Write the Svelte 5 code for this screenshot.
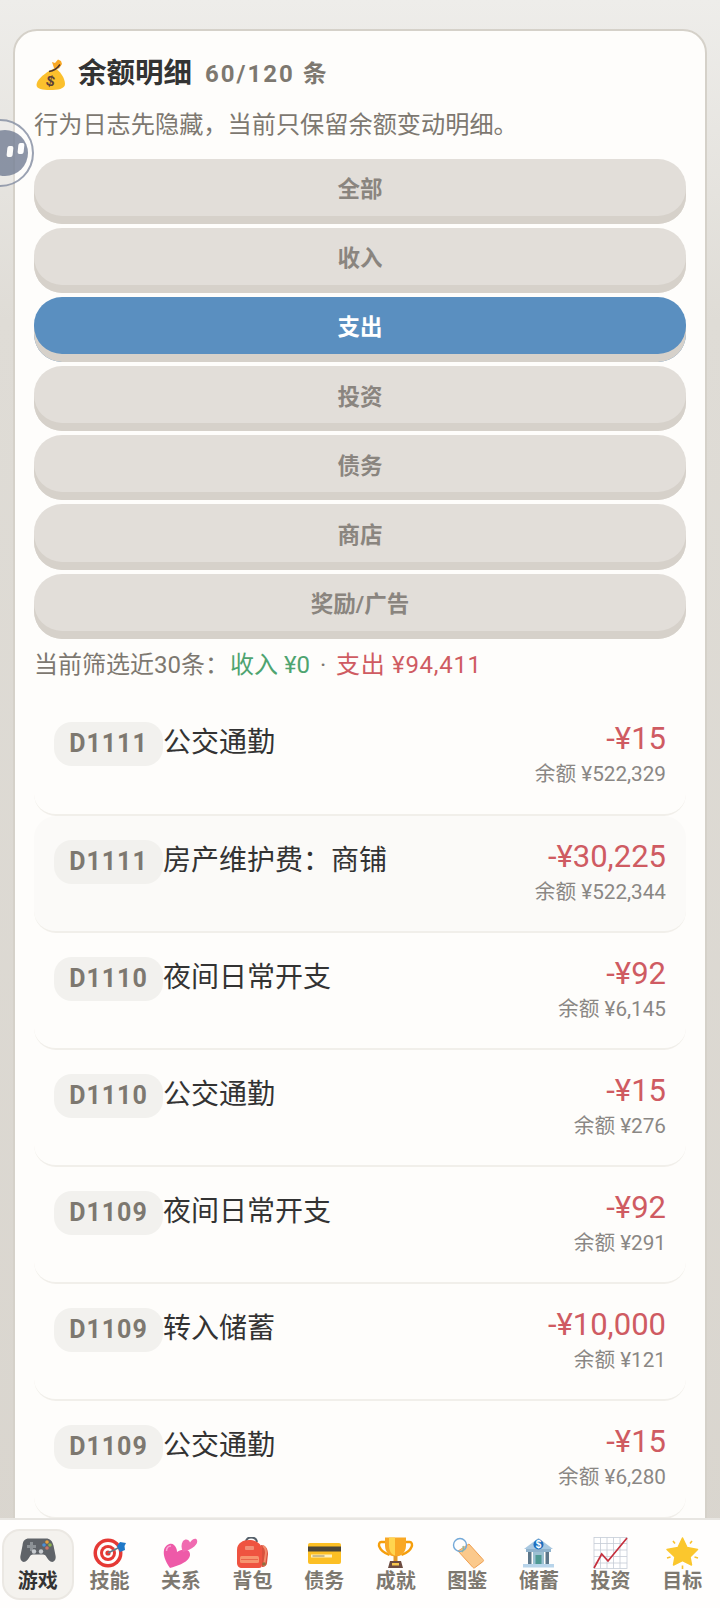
<script>
  const filters = ['全部', '收入', '支出', '投资', '债务', '商店', '奖励/广告'];
  const rows = [
    { day: 'D1111', title: '公交通勤', amount: '-¥15', balance: '¥522,329' },
    { day: 'D1111', title: '房产维护费：商铺', amount: '-¥30,225', balance: '¥522,344', alt: true },
    { day: 'D1110', title: '夜间日常开支', amount: '-¥92', balance: '¥6,145' },
    { day: 'D1110', title: '公交通勤', amount: '-¥15', balance: '¥276' },
    { day: 'D1109', title: '夜间日常开支', amount: '-¥92', balance: '¥291' },
    { day: 'D1109', title: '转入储蓄', amount: '-¥10,000', balance: '¥121' },
    { day: 'D1109', title: '公交通勤', amount: '-¥15', balance: '¥6,280' }
  ];
  const tabs = ['游戏', '技能', '关系', '背包', '债务', '成就', '图鉴', '储蓄', '投资', '目标'];
</script>

<div class="page">
  <main class="scroll">
    <section class="card">
      <h2 class="head">
        <svg class="bag" viewBox="0 0 30 31">
          <path d="M13 12C7 16 .5 21 .5 26c0 4 6 5 13.500 5s15-1 15-6c0-6-5-13-10-16z" fill="#fbc02d"/>
          <path d="M18 9l-2-6 3 1 3-3.500 3 1.500 1 3-3 4.500z" fill="#f9a825"/>
          <path d="M13 12.500c4-.5 8-2.500 11-7" stroke="#4e342e" stroke-width="1.500" fill="none"/>
          <text x="14.500" y="27" text-anchor="middle" font-size="15" font-weight="700" fill="#5d4037" font-family="Liberation Sans, sans-serif" transform="rotate(14 14 22)">$</text>
        </svg>
        <span>余额明细</span>
        <small>60/120 条</small>
      </h2>
      <p class="note">行为日志先隐藏，当前只保留余额变动明细。</p>
      <div class="filters">
        {#each filters as f}
          <button class="filter" class:active={f === '支出'}>{f}</button>
        {/each}
      </div>
      <p class="sum">当前筛选近30条：<span class="in">收入 ¥0</span><span class="dot">·</span><span class="out">支出 ¥94,411</span></p>
      <ul class="list">
        {#each rows as r}
          <li class="row" class:alt={r.alt}>
            <span class="day">{r.day}</span>
            <span class="title">{r.title}</span>
            <span class="right">
              <b>{r.amount}</b>
              <em>余额 {r.balance}</em>
            </span>
          </li>
        {/each}
      </ul>
    </section>
  </main>

  <div class="bubble"><i></i><u class="e1"></u><u class="e2"></u></div>

  <nav class="nav">
    {#each tabs as t, i}
      <div class="tab" class:on={i === 0}>
        <svg viewBox="0 0 37 33" class="ico">
          {#if i === 0}
            <path d="M10 1.500h17c4 0 6 2 7.500 7l2 10c1 5-2 7.500-5 6-2-1-3-3-5-6-1-1-2-1-3-1h-9c-1 0-2 0-3 1-2 3-3 5-5 6-3 1.500-6-1-5-6l2-10C4 3.500 6 1.500 10 1.500z" fill="#5f6368"/>
            <path d="M8 8h3V5h3v3h3v3h-3v3h-3v-3H8z" fill="#8d9296"/>
            <circle cx="15" cy="14.500" r="2.200" fill="#c8ccd0"/><circle cx="22" cy="14.500" r="2.200" fill="#c8ccd0"/>
            <circle cx="28" cy="5" r="1.800" fill="#e8a33d"/><circle cx="25" cy="8" r="1.800" fill="#4a90d9"/><circle cx="31" cy="8" r="1.800" fill="#8bb04a"/><circle cx="28" cy="11" r="1.800" fill="#c9746a"/>
          {:else if i === 1}
            <circle cx="17" cy="16" r="14.500" fill="#e53935"/><circle cx="17" cy="16" r="11" fill="#fff"/><circle cx="17" cy="16" r="8" fill="#e53935"/><circle cx="17" cy="16" r="5" fill="#fff"/><circle cx="17" cy="16" r="2.600" fill="#e53935"/>
            <path d="M17 16L29 10" stroke="#607d8b" stroke-width="1.500"/><path d="M26 9l3-4 6 1-1.500 3 .5 4-5 2z" fill="#1e78c8"/>
          {:else if i === 2}
            <path d="M8 31C3 24 1 18 2 13 3 8 9 5 12 8c2 2 3 4 3 7 3-2 7-3 10-2 3 1 4 5 2 8-3 5-12 8-19 10z" fill="#ee5aa8"/>
            <path d="M4.500 14c0-3 2-5 4.500-5" stroke="#f9a8d4" stroke-width="1.500" fill="none"/>
            <path d="M21 15c-2-4-2-8 0-11 2-2.500 6-2 7 1.500C30 2 34 .5 35 3c1.500 4-4 9-14 12z" fill="#f06ab0"/>
          {:else if i === 3}
            <path d="M27 8c4 0 7 3 7 9l-1 9c0 2-2 4-5 4z" fill="#d9503c"/>
            <path d="M29 9c2 1 3 3 3 7l-2 13" stroke="#f28b6c" stroke-width="2" fill="none"/>
            <path d="M12 5c0-6 10-6 11 0" stroke="#56606a" stroke-width="2" fill="none"/>
            <path d="M8 31c-3 0-5-2-5-5V13C3 6 9 3 15 3s13 3 13 10v15c0 2-1 3-3 3z" fill="#ef5340"/>
            <rect x="6" y="19" width="19" height="7" rx="1.500" fill="#f7946f"/><path d="M7 22.500h17" stroke="#e8664c" stroke-width="1"/>
            <rect x="11" y="9" width="9" height="4" rx="1" fill="#f28f78"/>
            <circle cx="30" cy="27" r="1.800" fill="#8d6e3f"/>
          {:else if i === 4}
            <rect x="2" y="6" width="33" height="21" rx="2" fill="#fcbf24"/><rect x="2" y="9.500" width="33" height="5" fill="#4b4538"/><rect x="5" y="17.500" width="21" height="3" fill="#fff2c0"/><path d="M6.500 19h12" stroke="#7a6a44" stroke-width=".8"/>
          {:else if i === 5}
            <path d="M10 5H4c-2 0-2.500 3-1.500 5 1.500 4 5 6 10 8" stroke="#f59e0b" stroke-width="2.400" fill="none"/><path d="M27 5h6c2 0 2.500 3 1.500 5-1.500 4-5 6-10 8" stroke="#f59e0b" stroke-width="2.400" fill="none"/>
            <path d="M8 .5h21v8c0 8-6 11-10.500 11S8 16.500 8 8.500z" fill="#f9a825"/><path d="M12 .5h6v18c-4-1-6-5-6-10z" fill="#ffd54f"/>
            <rect x="16.500" y="19" width="4" height="5" fill="#e39a2b"/><path d="M13 24h11l2 7H11z" fill="#6d4c41"/><rect x="15" y="26" width="7" height="2.500" fill="#f9c74f"/>
          {:else if i === 6}
            <path d="M9 14L20 7l14 15.500c.8 1 .6 1.500-.2 2.200L26 30.500c-.8.700-1.500.600-2.200-.2z" fill="#fbc98c" stroke="#ef9f50" stroke-width="1"/>
            <circle cx="11" cy="8" r="6.500" fill="none" stroke="#74a9d8" stroke-width="1.400"/><path d="M14 9c1 2 .5 4-1 6" stroke="#8fb5a0" stroke-width="1.500" fill="none"/>
          {:else if i === 7}
            <path d="M18.500 1L4 12h29z" fill="#a9c8e0"/><rect x="6" y="12" width="25" height="3" fill="#8fb2cc"/>
            <rect x="8" y="15" width="3.500" height="12" fill="#5d7689"/><rect x="25.500" y="15" width="3.500" height="12" fill="#5d7689"/><rect x="13" y="15" width="11" height="12" fill="#9cc0d2"/><rect x="15.500" y="18" width="6" height="9" fill="#4f9a94"/>
            <rect x="3" y="27" width="31" height="3.500" fill="#b8d4ea"/>
            <circle cx="18.500" cy="7.500" r="5" fill="#1e6fc0"/><text x="18.500" y="11" text-anchor="middle" font-size="10" font-weight="700" fill="#fff" font-family="Liberation Sans, sans-serif">$</text>
          {:else if i === 8}
            <rect x="2" y=".5" width="33" height="31" fill="#fff" stroke="#c5ccd6" stroke-width=".8"/>
            <path d="M8.500 .5v31M15 .5v31M21.500 .5v31M28 .5v31M2 6.500h33M2 13h33M2 19.500h33M2 26h33" stroke="#c5ccd6" stroke-width=".8"/>
            <path d="M2 31l7.700-14 6.300 7L35 1" fill="none" stroke="#c6303e" stroke-width="1.700"/>
          {:else}
            <path d="M18.500 1l4.500 9.500 10.500 2-7.500 7.500 1.500 8-9-4.500-9 4.500 1.500-8L3 12.500l11-2z" fill="#fbc72d" stroke="#fbc72d" stroke-linejoin="round" stroke-width="1.500"/>
            <path d="M9 4l2 2.500M28 4l-2 2.500M3 21l3.500-1M34 21l-3.500-1M18.500 28.500v3.500" stroke="#f9c22e" stroke-width="1.600"/>
          {/if}
        </svg>
        <span>{t}</span>
      </div>
    {/each}
  </nav>
</div>

<style>
  :global(body) { margin: 0; background: #dcd8d2; }
  :global(*) { box-sizing: border-box; }
  .page {
    position: relative;
    width: 720px;
    height: 1608px;
    display: flex;
    flex-direction: column;
    overflow: hidden;
    background: linear-gradient(#eeedea, #dfdcd6 20%, #d9d5ce);
    font-family: Roboto, "Noto Sans CJK SC", sans-serif;
    color: #333;
  }
  .scroll { flex: 1; min-height: 0; overflow: hidden; padding: 29px 13px 0; }
  .card {
    background: #fefdfb;
    border: 2px solid #d5d1c9;
    border-radius: 24px;
    padding: 23px 19px;
  }
  .head { margin: 0; display: flex; align-items: center; font-size: 28.500px; line-height: 40px; font-weight: 700; color: #333; }
  .bag { width: 30px; height: 31px; margin: 0 12px 0 2px; }
  .head small { margin-left: 13px; font-size: 24px; font-weight: 700; color: #7d7870; letter-spacing: 2px; }
  .note { margin: 13px 0 0; font-size: 24.200px; line-height: 36px; color: #7d7870; }
  .filters { display: flex; flex-direction: column; gap: 4px; margin-top: 15.500px; }
  .filter {
    height: 65.200px;
    padding: 0 0 8px;
    border: 0;
    border-radius: 28px;
    background: #e2ded9;
    box-shadow: inset 0 -8px 0 #d6d1ca;
    font: 700 22.500px Roboto, "Noto Sans CJK SC", sans-serif;
    color: #8a857f;
  }
  .filter.active { background: #5a8fc0; color: #fff; }
  .sum { margin: 9.500px 0 0; font-size: 24px; line-height: 34px; color: #7d7870; }
  .in { color: #4ea470; margin-left: 1px; }
  .out { color: #cf5b62; letter-spacing: .7px; }
  .dot { display: inline-block; width: 26px; text-align: center; }
  .list { list-style: none; margin: 16px 0 0; padding: 0; }
  .row {
    display: flex;
    align-items: flex-start;
    height: 117.200px;
    padding: 24px 20px 0;
    border-radius: 22px;
    border-bottom: 2px solid #f1efea;
  }
  .row.alt { background: #fbfaf8; }
  .day {
    flex: none;
    width: 109px;
    height: 44px;
    border-radius: 18px;
    background: #f2f1ee;
    text-align: center;
    font-size: 25px;
    line-height: 44px;
    font-weight: 700;
    letter-spacing: 1px;
    color: #7d7870;
  }
  .title { flex: 1; padding-top: 1px; font-size: 28px; line-height: 40px; color: #333; }
  .right { display: flex; flex-direction: column; align-items: flex-end; margin-top: -4px; }
  .right b { font-size: 31px; line-height: 41px; font-weight: 400; color: #cf5b62; }
  .right em { font-style: normal; font-size: 20.700px; line-height: 30px; color: #8a8784; }
  .nav {
    flex: none;
    height: 90px;
    display: flex;
    padding: 9px 2px 8px;
    background: #fffefd;
    border-top: 2px solid #e8e6e2;
  }
  .tab {
    flex: 1;
    min-width: 0;
    display: flex;
    flex-direction: column;
    align-items: center;
    border-radius: 18px;
    border: 2px solid transparent;
    padding-top: 6px;
    font-size: 20px;
    line-height: 26px;
    font-weight: 700;
    color: #7d7870;
  }
  .tab.on { background: #f4f2ee; border-color: #ebe8e3; color: #333; }
  .ico { flex: none; width: 37px; height: 33px; margin-bottom: -2px; }
  .bubble {
    position: absolute;
    left: -34px;
    top: 119px;
    width: 68px;
    height: 68px;
    border-radius: 50%;
    border: 2px solid #8a93a6;
    opacity: 0.85;
    background: rgba(255, 255, 255, 0.3);
  }
  .bubble i { position: absolute; left: 14px; top: 9px; width: 46px; height: 46px; border-radius: 50%; background: #7b859a; }
  .bubble u { position: absolute; width: 6px; height: 11px; background: #fff; border-radius: 2px; transform: skewX(-6deg); }
  .e1 { left: 39px; top: 25px; }
  .e2 { left: 50px; top: 22px; }
</style>
